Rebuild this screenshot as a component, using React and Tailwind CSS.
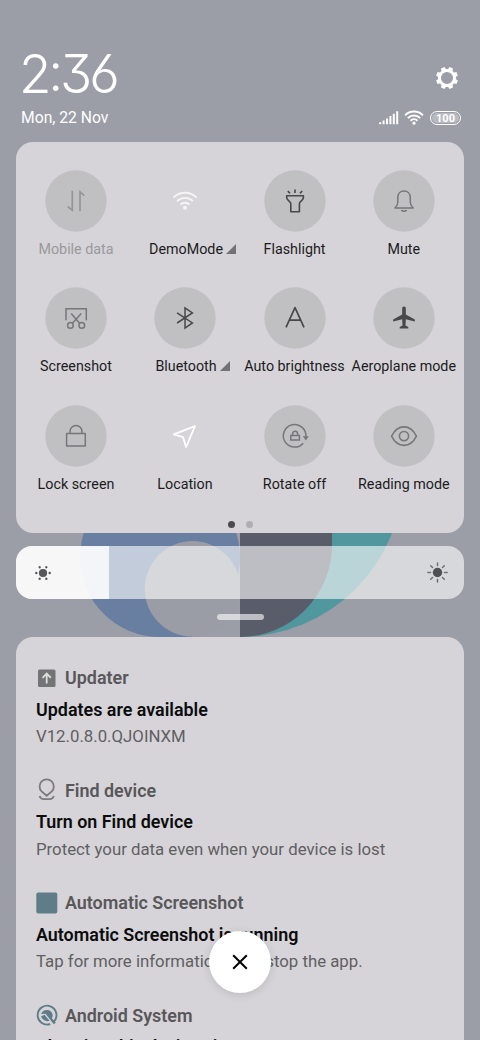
import React from "react";

function Wifi({ className, weight = 1.9 }) {
  return (
    <g className={className} fill="none" strokeWidth={weight}>
      <path d="M-11.6 -3.4 A16.2 16.2 0 0 1 11.6 -3.4" />
      <path d="M-8 0.2 A11.2 11.2 0 0 1 8 0.2" />
      <path d="M-4.5 3.6 A6.4 6.4 0 0 1 4.5 3.6" />
      <circle cx="0" cy="6.7" r="2" fill="currentColor" stroke="none" />
    </g>
  );
}

const icons = {
  data: (
    <g className="stroke-[#959497]" fill="none" strokeWidth="1.7">
      <path d="M-3.7 -10.3 V9.2 L-8.3 5.6 M4 10.3 V-9.2 L8.4 -5.4" />
    </g>
  ),
  wifi: <Wifi className="stroke-[#f4f4f5] text-[#f4f4f5]" />,
  torch: (
    <g className="stroke-[#48484b]" fill="none" strokeWidth="1.6" strokeLinejoin="round">
      <path d="M-8.3 -5.2 H8.4 V-3.4 C8.4 -0.4 4.4 0 4.4 2.8 V10.7 H-4.2 V2.8 C-4.2 0 -8.3 -0.4 -8.3 -3.4 Z" />
      <path d="M0 -11.4 V-8 M-7.2 -10 L-5 -7.6 M7.2 -10 L5 -7.6" />
    </g>
  ),
  bell: (
    <g className="stroke-[#777679]" fill="none" strokeWidth="1.5" strokeLinejoin="round" strokeLinecap="round">
      <path d="M-9 7 H9.2 C7.6 5.4 6.3 4 6.3 1.6 V-3.6 C6.3 -7.6 3.6 -10 0 -10 S-6.2 -7.6 -6.2 -3.6 V1.6 C-6.2 4 -7.4 5.4 -9 7 Z" />
      <path d="M-2.3 9.5 Q0 10.8 2.3 9.5" />
    </g>
  ),
  shot: (
    <g className="stroke-[#777679]" fill="none" strokeWidth="1.5">
      <path d="M-10 2.2 V-9.3 H10.3 V2.2 M-4.8 -4.5 L3.6 5.2 M5.2 -4.5 L-3.6 5.2" />
      <circle cx="-5.6" cy="7.4" r="2.8" />
      <circle cx="5.8" cy="7.4" r="2.8" />
    </g>
  ),
  bluetooth: (
    <path className="stroke-[#48484b]" fill="none" strokeWidth="1.5" d="M-7.9 -5.2 L7.4 4.9 L0 10 V-10 L7.4 -5 L-7.9 5" />
  ),
  auto: (
    <path className="stroke-[#48484b]" fill="none" strokeWidth="1.7" strokeLinejoin="round" d="M-9 9.3 L0 -10.4 L9 9.3 M-6 2.2 H6" />
  ),
  plane: (
    <path
      className="fill-[#48484b]"
      d="M0 -11.5 C1.3 -11.5 1.8 -10.6 1.8 -9.6 V-3.6 L10.8 1.6 V3.4 L1.8 1.2 L1.5 7.6 L4.3 9 V10.6 H-4.3 V9 L-1.5 7.6 L-1.8 1.2 L-10.8 3.4 V1.6 L-1.8 -3.6 V-9.6 C-1.8 -10.6 -1.3 -11.5 0 -11.5 Z"
    />
  ),
  lock: (
    <g className="stroke-[#777679]" fill="none" strokeWidth="1.5" strokeLinejoin="round">
      <path d="M-9.4 -2.4 H9.3 V10 H-9.4 Z M-6 -2.4 V-4.6 A6 6 0 0 1 6 -4.6 V-2.4" />
    </g>
  ),
  location: (
    <path className="stroke-white" fill="none" strokeWidth="1.8" strokeLinejoin="round" d="M10 -9.8 L-11.3 -1.6 L-2 1.2 L1.1 11 Z" />
  ),
  rotate: (
    <g className="stroke-[#777679]" fill="none" strokeWidth="1.5">
      <path d="M10.9 0.9 A11.3 11.3 0 1 0 8.2 7.2" />
      <path className="fill-[#777679]" stroke="none" d="M7.8 0.3 H13.8 L10.8 4.6 Z" />
      <path d="M-4.2 -0.6 H4.4 V4 H-4.2 Z M-2.4 -0.8 V-2.2 A2.5 2.5 0 0 1 2.6 -2.2 V-0.8" />
    </g>
  ),
  eye: (
    <g className="stroke-[#777679]" fill="none" strokeWidth="1.6" strokeLinejoin="round">
      <path d="M-12.4 0.2 C-6.5 -12.2 6.5 -12.2 12.4 0.2 C6.5 12.4 -6.5 12.4 -12.4 0.2 Z" />
      <circle cx="0" cy="0.1" r="4.6" />
    </g>
  ),
};

const tiles = [
  { label: "Mobile data", icon: "data", dim: true },
  { label: "DemoMode", icon: "wifi", active: true, more: true },
  { label: "Flashlight", icon: "torch" },
  { label: "Mute", icon: "bell" },
  { label: "Screenshot", icon: "shot" },
  { label: "Bluetooth", icon: "bluetooth", more: true },
  { label: "Auto brightness", icon: "auto" },
  { label: "Aeroplane mode", icon: "plane" },
  { label: "Lock screen", icon: "lock" },
  { label: "Location", icon: "location", active: true },
  { label: "Rotate off", icon: "rotate" },
  { label: "Reading mode", icon: "eye" },
];

function Tile({ label, icon, dim, active, more }) {
  return (
    <div className="flex h-[117.3px] flex-col items-center">
      <svg width="62" height="62" viewBox="-31 -31 62 62">
        {!active && <circle r="30.7" className="fill-[#c0bfc2]" />}
        {icons[icon]}
      </svg>
      <div
        className={
          "relative mt-[7px] text-[14.3px] leading-5 whitespace-nowrap " +
          (dim ? "text-[#9a999c]" : "text-[#1c1c1e]") +
          (more ? " pl-[2px]" : "")
        }
      >
        {label}
        {more && (
          <svg className="absolute top-[5px] left-full ml-[3px]" width="10" height="10" viewBox="0 0 10 10">
            <path d="M10 0 V10 H0 Z" className="fill-[#737275]" />
          </svg>
        )}
      </div>
    </div>
  );
}

const noteIcons = {
  updater: (
    <>
      <rect x="2" y="1.5" width="17.5" height="17.5" rx="1.5" className="fill-[#737475]" />
      <path d="M10.7 15.5 V6 M6.5 9.8 L10.7 5.5 L14.9 9.8" fill="none" className="stroke-[#dddcde]" strokeWidth="1.8" />
    </>
  ),
  find: (
    <g fill="none" className="stroke-[#7b7b7d]" strokeWidth="1.8" strokeLinejoin="round">
      <path d="M10.7 15.8 L5.6 11.4 A7.1 7.1 0 1 1 15.8 11.4 Z" />
      <path d="M3.6 16 Q4.6 19.2 7.8 19.2 H13.6 Q16.8 19.2 17.8 16" />
    </g>
  ),
  shot: <rect x="0.3" y="-0.4" width="21" height="21" rx="2" className="fill-[#5f7d89]" />,
  android: (
    <g>
      <path d="M17.6 16.9 A9.4 9.4 0 1 0 14.2 19" fill="none" className="stroke-[#5f7d89]" strokeWidth="1.9" />
      <path d="M5.2 9 A6 6 0 0 1 16.6 9.4 Q17 11.4 15.8 13.2 L19.8 17.6 L17.8 19.2 L9.6 8.8 Z" className="fill-[#5f7d89]" />
      <path d="M5 11.6 L8.4 9.8 L13.6 15.8 Q8 17.4 5 11.6 Z" className="fill-[#5f7d89]" />
    </g>
  ),
};

const notes = [
  { icon: "updater", app: "Updater", title: "Updates are available", body: "V12.0.8.0.QJOINXM" },
  { icon: "find", app: "Find device", title: "Turn on Find device", body: "Protect your data even when your device is lost" },
  {
    icon: "shot",
    app: "Automatic Screenshot",
    title: "Automatic Screenshot is running",
    body: "Tap for more information or to stop the app.",
  },
  { icon: "android", app: "Android System", title: "Charging this device via USB" },
];

function Note({ icon, app, title, body }) {
  return (
    <div className="h-[112.5px] shrink-0 whitespace-nowrap">
      <div className="flex h-[24px] items-center">
        <svg className="overflow-visible" width="22" height="22" viewBox="0 0 22 22">
          {noteIcons[icon]}
        </svg>
        <div className="ml-[7px] text-[17.9px] font-semibold text-[#58575a]">{app}</div>
      </div>
      <div className="mt-[7px] text-[17.9px] leading-6 font-semibold text-[#0c0c0d]">{title}</div>
      {body && <div className="mt-[2.6px] text-[16.8px] leading-6 text-[#605f62]">{body}</div>}
    </div>
  );
}

function Wallpaper() {
  return (
    <svg className="absolute inset-0" width="480" height="1040" viewBox="0 0 480 1040">
      <circle cx="160" cy="557" r="80" className="fill-[#687fa2]" />
      <path d="M160 600 H192 V637 H160 Z" className="fill-[#687fa2]" />
      <circle cx="192.5" cy="588.8" r="47.8" className="fill-[#9b9da6]" />
      <path d="M240 474 H403 A163 163 0 0 1 240 637 Z" className="fill-[#51979e]" />
      <path d="M240 474 H332 V545 A92 92 0 0 1 240 637 Z" className="fill-[#595d6a]" />
    </svg>
  );
}

const rays = [0, 45, 90, 135, 180, 225, 270, 315];
const dots = [0, 60, 120, 180, 240, 300];

export default function App() {
  return (
    <div
      className="relative flex h-[1040px] w-[480px] flex-col overflow-hidden bg-[#9b9da7]"
      style={{ fontFamily: 'Roboto, "Liberation Sans", sans-serif' }}
    >
      <Wallpaper />

      <header className="relative flex h-[142px] shrink-0 justify-between pr-[19px] pl-[21px] text-white">
        <div>
          <div
            className="mt-[44px] -ml-[2px] h-[60px] text-[53px] leading-[60px] font-light tracking-[-3.2px]"
            style={{ fontFamily: "Inter, Lato, sans-serif", fontFeatureSettings: '"cv09", "cv03", "ss01"' }}
          >
            2<span className="inline-block -translate-y-[2px]">:</span>36
          </div>
          <div className="mt-[3px] text-[15.7px] leading-[22px]">Mon, 22 Nov</div>
        </div>
        <div className="flex flex-col items-end">
          <svg className="mt-[66px] mr-[2px]" width="24" height="24" viewBox="-12 -12 24 24">
            <circle r="7.5" fill="none" className="stroke-white" strokeWidth="3" />
            {rays.map((a) => (
              <path key={a} d="M-2.5 -8 L-1.9 -11 H1.9 L2.5 -8 Z" className="fill-white" transform={`rotate(${a + 22.5})`} />
            ))}
          </svg>
          <div className="mt-[20px] flex h-[15px] items-center">
            <svg width="20" height="14" viewBox="0 0 20 14">
              <path
                d="M1.2 13.2 V11.3 M4.6 13.2 V9.5 M8 13.2 V7.5 M11.4 13.2 V5.1 M14.8 13.2 V2.7 M18.2 13.2 V0.2"
                className="stroke-white"
                strokeWidth="2"
              />
            </svg>
            <svg className="ml-[5px] text-white" width="20" height="16" viewBox="-13 -10 26 20">
              <Wifi className="stroke-white" weight={2.6} />
            </svg>
            <div className="ml-[6px] flex h-[14px] w-[31px] items-center justify-center rounded-full border-[1.5px] border-white p-px">
              <div className="flex h-full w-full items-center justify-center rounded-full bg-white/30 pt-px text-[11px] leading-none font-bold">
                100
              </div>
            </div>
          </div>
        </div>
      </header>

      <section className="relative mx-4 h-[391px] shrink-0 rounded-[17px] bg-[#d6d4d8] pt-[28px]">
        <div className="grid grid-cols-[109px_109px_110px_108.6px] pl-[5.5px]">
          {tiles.map((t) => (
            <Tile key={t.label} {...t} />
          ))}
        </div>
        <div className="mt-[-1px] flex justify-center gap-[11px]">
          <div className="size-[7px] rounded-full bg-[#4b4a4d]" />
          <div className="size-[7px] rounded-full bg-[#afaeb1]" />
        </div>
      </section>

      <section className="relative mx-4 mt-[13px] flex h-[53px] shrink-0 items-center justify-between overflow-hidden rounded-[16px] bg-white/60">
        <div className="flex h-full w-[93px] items-center bg-white/80 pl-[18px]">
          <svg width="18" height="18" viewBox="-9 -9 18 18" className="fill-[#58585a]">
            <circle r="4.1" />
            {dots.map((a) => (
              <circle key={a} cx="6.7" r="1.2" transform={`rotate(${a})`} />
            ))}
          </svg>
        </div>
        <svg className="mr-[15px]" width="23" height="23" viewBox="-11.5 -11.5 23 23">
          <circle r="4.7" className="fill-[#505053]" />
          {rays.map((a) => (
            <path key={a} d="M0 -7 V-9.6" className="stroke-[#707073]" strokeWidth="1.5" strokeLinecap="round" transform={`rotate(${a})`} />
          ))}
        </svg>
      </section>

      <div className="relative mt-[15px] h-[6px] w-[47px] shrink-0 self-center rounded-full bg-white/60" />

      <section className="relative mx-4 mt-[17px] flex h-[420px] shrink-0 flex-col rounded-t-[17px] bg-[#d6d4d8] pt-[29.6px] pl-5">
        {notes.map((n) => (
          <Note key={n.app} {...n} />
        ))}
      </section>

      <button className="absolute top-[931px] left-[209px] flex size-[62px] items-center justify-center rounded-full bg-white shadow-[0_2px_10px_rgba(0,0,0,0.12)]">
        <svg width="16" height="16" viewBox="0 0 16 16">
          <path d="M1.2 1.2 L14.8 14.8 M14.8 1.2 L1.2 14.8" className="stroke-black" strokeWidth="2" />
        </svg>
      </button>
    </div>
  );
}
